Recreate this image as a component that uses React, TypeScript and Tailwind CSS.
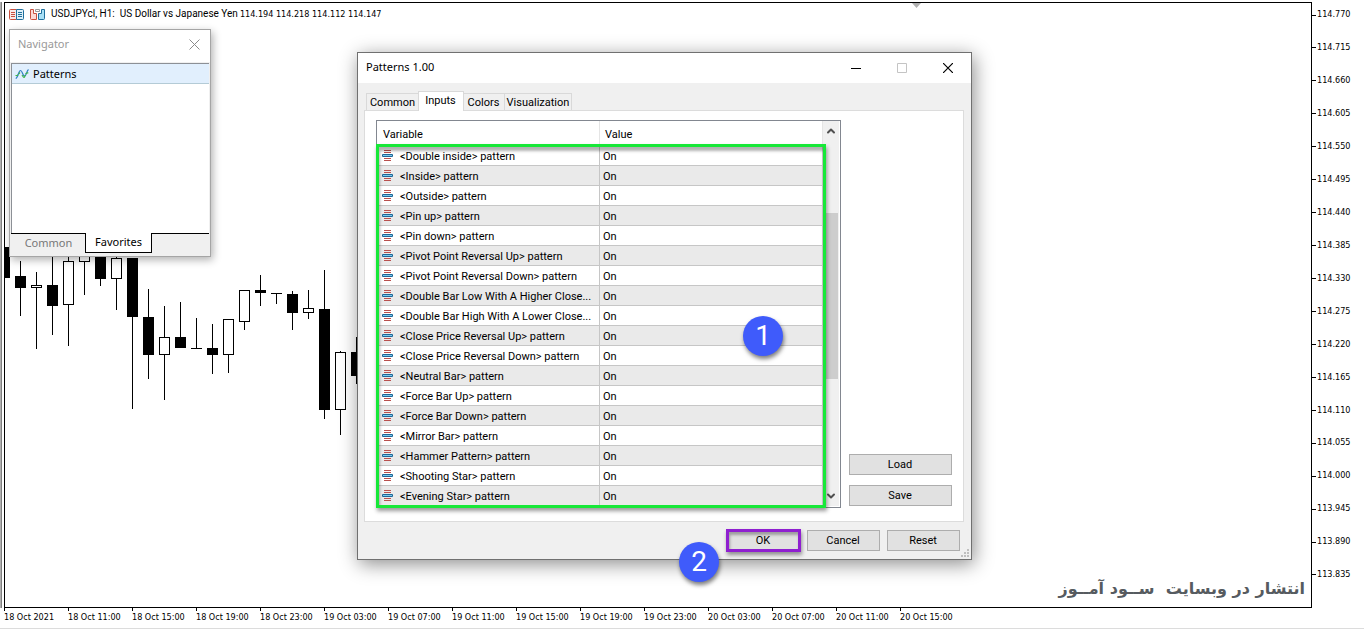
import { ChevronDown, ChevronUp } from "lucide-react";

const prices = [
  "114.770", "114.715", "114.660", "114.605", "114.550", "114.495", "114.440", "114.385", "114.330",
  "114.275", "114.220", "114.165", "114.110", "114.055", "114.000", "113.945", "113.890", "113.835",
];

const times = [
  "18 Oct 2021", "18 Oct 11:00", "18 Oct 15:00", "18 Oct 19:00", "18 Oct 23:00",
  "19 Oct 03:00", "19 Oct 07:00", "19 Oct 11:00", "19 Oct 15:00", "19 Oct 19:00",
  "19 Oct 23:00", "20 Oct 03:00", "20 Oct 07:00", "20 Oct 11:00", "20 Oct 15:00",
];

const patterns = [
  "<Double inside> pattern",
  "<Inside> pattern",
  "<Outside> pattern",
  "<Pin up> pattern",
  "<Pin down> pattern",
  "<Pivot Point Reversal Up> pattern",
  "<Pivot Point Reversal Down> pattern",
  "<Double Bar Low With A Higher Close...",
  "<Double Bar High With A Lower Close...",
  "<Close Price Reversal Up> pattern",
  "<Close Price Reversal Down> pattern",
  "<Neutral Bar> pattern",
  "<Force Bar Up> pattern",
  "<Force Bar Down> pattern",
  "<Mirror Bar> pattern",
  "<Hammer Pattern> pattern",
  "<Shooting Star> pattern",
  "<Evening Star> pattern",
];

type Candle = { x: number; high: number; top: number; bottom: number; low: number; bear?: boolean };

const candles: Candle[] = [
  { x: 4, high: 247, top: 247, bottom: 278, low: 278, bear: true },
  { x: 20, high: 261, top: 276, bottom: 288, low: 316, bear: true },
  { x: 36, high: 272, top: 285, bottom: 288, low: 349 },
  { x: 52, high: 250, top: 285, bottom: 306, low: 335, bear: true },
  { x: 68, high: 250, top: 261, bottom: 305, low: 346 },
  { x: 84, high: 240, top: 245, bottom: 262, low: 295 },
  { x: 100, high: 240, top: 245, bottom: 279, low: 286, bear: true },
  { x: 116, high: 245, top: 258, bottom: 279, low: 310 },
  { x: 132, high: 258, top: 258, bottom: 317, low: 409, bear: true },
  { x: 148, high: 289, top: 317, bottom: 355, low: 379, bear: true },
  { x: 164, high: 306, top: 337, bottom: 355, low: 400 },
  { x: 180, high: 302, top: 337, bottom: 348, low: 348, bear: true },
  { x: 196, high: 318, top: 348, bottom: 349, low: 349, bear: true },
  { x: 212, high: 324, top: 348, bottom: 355, low: 374, bear: true },
  { x: 228, high: 319, top: 319, bottom: 355, low: 373 },
  { x: 244, high: 290, top: 290, bottom: 322, low: 330 },
  { x: 260, high: 275, top: 290, bottom: 293, low: 306, bear: true },
  { x: 276, high: 293, top: 293, bottom: 294, low: 304, bear: true },
  { x: 292, high: 291, top: 294, bottom: 313, low: 330, bear: true },
  { x: 308, high: 290, top: 308, bottom: 313, low: 319 },
  { x: 324, high: 270, top: 309, bottom: 410, low: 419, bear: true },
  { x: 340, high: 351, top: 352, bottom: 410, low: 435 },
  { x: 356, high: 337, top: 352, bottom: 376, low: 384, bear: true },
];

function CandleChart() {
  return (
    <svg className="absolute top-0 left-0" width="400" height="460" viewBox="5 3 400 460" shapeRendering="crispEdges" aria-label="USDJPY candles">
      {candles.map((c) => (
        <g key={c.x}>
          <rect x={c.x} y={c.high} width="1" height={c.low - c.high} fill="#000" />
          {c.bear ? (
            <rect x={c.x - 5} y={c.top} width="11" height={c.bottom - c.top} fill="#000" />
          ) : (
            <rect x={c.x - 4.5} y={c.top + 0.5} width="10" height={c.bottom - c.top - 1} fill="#fff" stroke="#000" />
          )}
        </g>
      ))}
    </svg>
  );
}

function DepthIcon() {
  return (
    <svg width="15" height="11" viewBox="0 0 15 11" aria-hidden="true">
      <path d="M7.500.5H1.500q-1 0-1 1v8q0 1 1 1h6" fill="#fbe9e7" stroke="#c8503f" />
      <path d="M7.500.5h6q1 0 1 1v8q0 1-1 1h-6z" fill="#dff0f8" stroke="#1f6f9c" />
      <path d="M2 3.500h4M2 5.500h4M2 7.500h4" stroke="#c8503f" />
      <path d="M9 3.500h4M9 5.500h4M9 7.500h4" stroke="#1f6f9c" />
    </svg>
  );
}

function TradeIcon() {
  return (
    <svg width="15" height="11" viewBox="0 0 15 11" aria-hidden="true">
      <path d="M.5.5h3v4h3v6h-5q-1 0-1-1z" fill="#fbd9d5" stroke="#c8503f" />
      <path d="M14.500.5h-3v4h-3v6h5q1 0 1-1z" fill="#a9e0f6" stroke="#1f6f9c" />
      <path d="M5.500.5h4v2h-4z" fill="#fff" stroke="#9a9a9a" />
    </svg>
  );
}

function IndicatorIcon() {
  return (
    <svg width="14" height="12" viewBox="0 0 14 12" fill="none" aria-hidden="true">
      <path d="M.7 10.500C3 10 3.500 2.500 5.500 2.500S7.500 8 9.500 8s2-5 4-6.500" stroke="#2f7fc4" strokeWidth="1.200" />
      <path d="M.5 7.500h2l2.500-3M7 7l2 3 2-4.500 2.500-1" stroke="#3fb54a" strokeWidth="1.200" strokeDasharray="3 1" />
    </svg>
  );
}

function EnumIcon() {
  return (
    <svg width="11" height="11" viewBox="0 0 11 11" className="shrink-0" aria-hidden="true">
      <path d="M2 .5h7M2 2.500h7M2 8.500h7M2 10.500h7" stroke="#b9504e" />
      <rect x="0" y="4" width="11" height="3" rx="1" fill="#1d6796" />
      <rect x="1" y="5" width="9" height="1" fill="#7cc8ee" />
    </svg>
  );
}

function Navigator() {
  return (
    <section aria-label="Navigator" className="absolute top-[26px] left-1 flex h-[228px] w-[202px] flex-col border border-[#a5a5a5] bg-[#f0f0f0] font-['Noto_Sans',sans-serif] text-[11px] shadow-[2px_3px_8px_rgba(0,0,0,0.3)]">
      <header className="flex h-8 items-center justify-between bg-white pr-2 pb-[3px] pl-2 text-[#999]">
        <h2>Navigator</h2>
        <button aria-label="Close navigator" className="flex size-4 items-center justify-center">
          <svg width="11" height="11" viewBox="0 0 11 11" aria-hidden="true">
            <path d="M.5.5l10 10M10.500.5l-10 10" stroke="#8a8a8a" />
          </svg>
        </button>
      </header>
      <div className="mx-px mt-px flex flex-1 flex-col border-t border-l border-[#8c9096] bg-white">
        <ul>
          <li className="flex h-5 items-center gap-1 border-b border-[#b4cbd6] bg-[#e1effd] pt-px pl-[3px] text-black">
            <IndicatorIcon />
            Patterns
          </li>
        </ul>
      </div>
      <div role="tablist" className="mx-px flex h-[23px] items-start">
        <button role="tab" aria-selected="false" className="h-5 w-[74px] border-t border-black pl-px text-[#777]">Common</button>
        <button role="tab" aria-selected="true" className="h-5 w-[67px] border-x border-b border-black bg-white text-black">Favorites</button>
        <span className="flex-1 border-t border-black" />
      </div>
    </section>
  );
}

function ScrollBar() {
  return (
    <div className="flex w-4 flex-col bg-[#f0f0f0] text-[#505050]">
      <button aria-label="Scroll up" className="flex h-5 items-center justify-center">
        <ChevronUp size={12} strokeWidth={4} />
      </button>
      <div className="flex flex-1 flex-col pt-[72px] pr-px">
        <div className="h-[166px] bg-[#cdcdcd]" />
      </div>
      <button aria-label="Scroll down" className="flex h-5 items-center justify-center">
        <ChevronDown size={12} strokeWidth={4} />
      </button>
    </div>
  );
}

function Badge({ n }: { n: number }) {
  return (
    <span className="flex size-10 items-center justify-center rounded-full bg-[#3f5bfb] font-['Roboto',sans-serif] text-[28px] leading-none text-white shadow-[1px_3px_4px_rgba(0,0,0,0.5)]">
      {n}
    </span>
  );
}

function PatternsDialog() {
  return (
    <section role="dialog" aria-label="Patterns 1.00" className="absolute top-[49px] left-[352px] w-[615px] border border-[#707070] bg-[#f0f0f0] font-['Roboto',sans-serif] text-[11px] text-black shadow-[2px_4px_18px_rgba(0,0,0,0.45)]">
      <header className="flex h-[30px] items-center justify-between bg-white pr-[15px] pb-px pl-2">
        <h2 className="font-['Noto_Sans',sans-serif]">Patterns 1.00</h2>
        <div className="flex gap-[30px]">
          <button aria-label="Minimize" className="flex size-4 items-center justify-center">
            <svg width="10" height="10" viewBox="0 0 10 10" aria-hidden="true"><path d="M0 5.500h10" stroke="#000" /></svg>
          </button>
          <button aria-label="Maximize" className="flex size-4 items-center justify-center">
            <svg width="10" height="10" viewBox="0 0 10 10" fill="none" aria-hidden="true"><path d="M.5.5h9v9h-9z" stroke="#c4c4c4" /></svg>
          </button>
          <button aria-label="Close" className="flex size-4 items-center justify-center">
            <svg width="10" height="10" viewBox="0 0 10 10" aria-hidden="true"><path d="M0 0l10 10M10 0L0 10" stroke="#000" strokeWidth="1.200" /></svg>
          </button>
        </div>
      </header>

      <div className="pt-2 pr-[7px] pl-[6px]">
        <div role="tablist" className="flex h-[19px] items-end pl-[2px]">
          <button role="tab" aria-selected="false" className="h-[17px] w-[52px] border-t border-l border-[#d9d9d9] pt-px">Common</button>
          <button role="tab" aria-selected="true" className="relative -mb-px h-5 w-[46px] border-x border-t border-[#d9d9d9] bg-white pr-px">Inputs</button>
          <button role="tab" aria-selected="false" className="h-[17px] w-10 border-t border-[#d9d9d9] pt-px pr-px">Colors</button>
          <button role="tab" aria-selected="false" className="h-[17px] w-[68px] border-x border-t border-[#d9d9d9] pt-px">Visualization</button>
        </div>

        <div role="tabpanel" className="flex gap-2 border border-[#dcdcdc] bg-white pt-[9px] pr-[11px] pb-[13px] pl-[11px]">
          <div className="relative flex w-[465px] border border-[#828790] pb-px">
            <table className="w-[446px] table-fixed border-separate border-spacing-0 text-left">
              <thead>
                <tr className="h-[25px]">
                  <th className="w-[223px] border-r border-[#e5e5e5] p-0 pt-[3px] pl-[6px] font-normal">Variable</th>
                  <th className="border-r border-[#e5e5e5] p-0 pt-[3px] pl-[5px] font-normal">Value</th>
                </tr>
              </thead>
              <tbody>
                {patterns.map((name) => (
                  <tr key={name} className="h-5 even:bg-[#eaeaea]">
                    <td className="border-r border-b border-[#c6c6c6] p-0 pl-[5px] leading-4">
                      <span className="flex items-center gap-[7px] whitespace-nowrap">
                        <EnumIcon />
                        <span className="pt-[2px]">{name}</span>
                      </span>
                    </td>
                    <td className="border-r border-b border-[#c6c6c6] p-0 pt-[2px] pl-[3px] leading-4">On</td>
                  </tr>
                ))}
              </tbody>
            </table>
            <ScrollBar />
            <div className="pointer-events-none absolute top-[23px] -left-px h-[364px] w-[450px] border-3 border-[#17e838] shadow-[1px_3px_4px_rgba(0,0,0,0.4),inset_1px_4px_3px_rgba(0,0,0,0.3)]" />
            <div className="absolute top-[195px] left-[366px]">
              <Badge n={1} />
            </div>
          </div>
          <div className="flex flex-1 flex-col justify-end gap-[10px] pb-[2px]">
            <button className="h-[21px] border border-[#adadad] bg-[#e1e1e1] pt-px pr-px">Load</button>
            <button className="h-[21px] border border-[#adadad] bg-[#e1e1e1] pt-px pr-px">Save</button>
          </div>
        </div>
      </div>

      <footer className="flex justify-end gap-[7px] pt-2 pr-[11px] pb-2">
        <div className="relative">
          <button className="h-[21px] w-[73px] border border-[#adadad] bg-[#e1e1e1] pt-px pr-px">OK</button>
          <div className="pointer-events-none absolute -inset-px border-3 border-[#8f1fd0] shadow-[1px_3px_4px_rgba(0,0,0,0.4),inset_1px_3px_3px_rgba(0,0,0,0.3)]" />
        </div>
        <button className="h-[21px] w-[73px] border border-[#adadad] bg-[#e1e1e1] pt-px pr-px">Cancel</button>
        <button className="h-[21px] w-[73px] border border-[#adadad] bg-[#e1e1e1] pt-px pr-px">Reset</button>
      </footer>

      <svg className="absolute right-[2px] bottom-[2px]" width="8" height="8" viewBox="0 0 8 8" fill="#bfbfbf" shapeRendering="crispEdges" aria-hidden="true">
        <path d="M6 0h2v2H6zM3 3h2v2H3zM6 3h2v2H6zM0 6h2v2H0zM3 6h2v2H3zM6 6h2v2H6z" />
      </svg>
      <div className="absolute bottom-[-23px] left-[321px]">
        <Badge n={2} />
      </div>
    </section>
  );
}

export default function App() {
  return (
    <main className="flex min-h-screen flex-col border-b border-[#dcdcdc] bg-white pt-[2px] font-['DejaVu_Sans_Condensed','DejaVu_Sans',sans-serif] text-[9px] text-black">
      <div className="flex flex-1">
        <div className="w-1 border-r-2 border-l border-r-white border-l-[#b0b0b0] bg-[#808080]" />
        <div className="relative flex-1 overflow-hidden border border-black">
          <CandleChart />
          <header className="flex items-center gap-[6px] pt-1 pl-1">
            <DepthIcon />
            <TradeIcon />
            <h1 className="flex items-center gap-[2px] leading-[14px] whitespace-pre">
              <span className="font-['Roboto',sans-serif] text-[10px]">{"USDJPYcl, H1:  US Dollar vs Japanese Yen"}</span>
              <span>114.194 114.218 114.112 114.147</span>
            </h1>
          </header>
          <svg className="absolute top-0 left-[907px]" width="9" height="5" viewBox="0 0 9 5" aria-hidden="true">
            <path d="M0 0h9L4.500 5z" fill="#b0b0b0" />
          </svg>
          <Navigator />
          <PatternsDialog />
          <p dir="rtl" lang="fa" className="absolute right-[6px] bottom-1 font-['DejaVu_Sans',sans-serif] text-[16px] leading-7 font-bold whitespace-pre text-[#565b60]">
            {"انتشار در وبسایت  ســود آمــوز"}
          </p>
        </div>
        <ol className="flex w-[52px] flex-col justify-between pt-[7px] pb-[27px]">
          {prices.map((p) => (
            <li key={p} className="flex h-3 items-center gap-px">
              <span className="h-px w-1 bg-black" />
              {p}
            </li>
          ))}
        </ol>
      </div>
      <ol className="flex h-5 pl-1">
        {times.map((t) => (
          <li key={t} className="w-16 whitespace-nowrap">
            <span className="block h-[3px] w-px bg-black" />
            <span className="block leading-3">{t}</span>
          </li>
        ))}
      </ol>
    </main>
  );
}
